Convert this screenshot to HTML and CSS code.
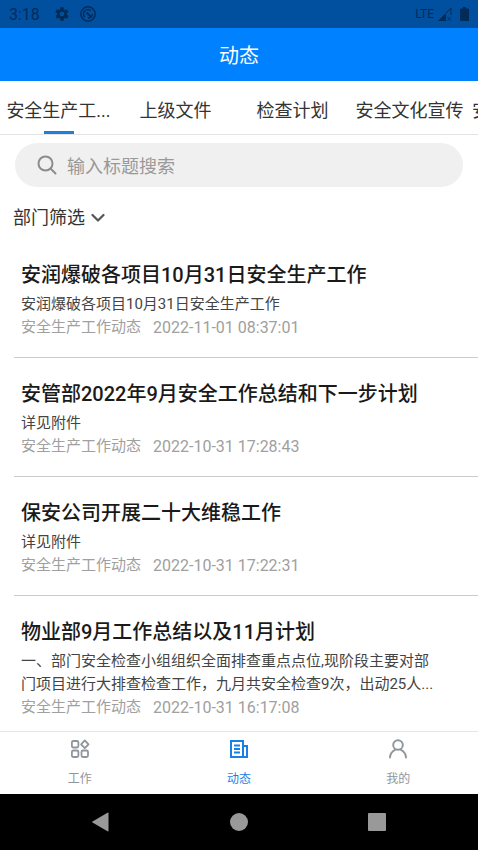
FILE: index.html
```html
<!DOCTYPE html>
<html lang="zh-CN">
<head>
<meta charset="utf-8">
<meta name="viewport" content="width=device-width, initial-scale=1">
<title>动态</title>
<link rel="stylesheet" href="styles.css">
</head>
<body>
<div class="app">
  <div class="status">
    <span class="status-time">3:18</span>
    <svg class="status-gear" width="16" height="16" viewBox="0 0 24 24" aria-hidden="true"><path fill="currentColor" d="M19.4 13a7.500 7.500 0 0 0 0-2l2.100-1.600a.5.5 0 0 0 .1-.7l-2-3.400a.5.5 0 0 0-.6-.2l-2.500 1a7.300 7.300 0 0 0-1.700-1l-.4-2.600a.5.5 0 0 0-.5-.5h-4a.5.5 0 0 0-.5.5l-.4 2.600a7.300 7.300 0 0 0-1.700 1l-2.500-1a.5.5 0 0 0-.6.2l-2 3.400a.5.5 0 0 0 .1.700L4.600 11a7.500 7.500 0 0 0 0 2l-2.100 1.600a.5.5 0 0 0-.1.700l2 3.400c.1.200.4.300.6.200l2.500-1a7.300 7.300 0 0 0 1.700 1l.4 2.600c0 .3.200.5.5.5h4c.3 0 .5-.2.5-.5l.4-2.600a7.300 7.300 0 0 0 1.700-1l2.500 1c.2.100.5 0 .6-.2l2-3.400a.5.5 0 0 0-.1-.7zM12 15.500a3.500 3.500 0 1 1 0-7 3.500 3.500 0 0 1 0 7z"/></svg>
    <svg class="status-sync" width="16" height="16" viewBox="0 0 16 16" aria-hidden="true" fill="none" stroke="currentColor"><circle cx="8" cy="8" r="7.200" stroke-width="1.400"/><path stroke-width="1.400" d="M4.800 11.200A4.300 4.300 0 0 1 10.800 4.800M8 12.300A4.300 4.300 0 0 0 12.300 8"/><path stroke-width="2" d="m6.500 6.500 5 5"/></svg>
    <span class="status-net">LTE</span>
    <svg width="14" height="14" viewBox="0 0 14 14" aria-hidden="true"><path fill="currentColor" d="M0 14 8 6v8z"/><path fill="none" stroke="currentColor" d="M8 6 13 1v7M9.500 10l3.500 3.500M13 10l-3.500 3.500"/></svg>
    <svg class="status-battery" width="9" height="14" viewBox="0 0 9 14" aria-hidden="true"><path fill="currentColor" d="M3 0h3v1.500h2a1 1 0 0 1 1 1V13a1 1 0 0 1-1 1H1a1 1 0 0 1-1-1V2.500a1 1 0 0 1 1-1h2z"/></svg>
  </div>
  <header class="header"><h1>动态</h1></header>
  <nav class="tabs">
    <a class="tab tab-active" href="#">安全生产工...</a>
    <a class="tab" href="#">上级文件</a>
    <a class="tab" href="#">检查计划</a>
    <a class="tab" href="#">安全文化宣传</a>
    <a class="tab tab-peek" href="#">安</a>
  </nav>
  <label class="search">
    <svg width="20" height="20" viewBox="0 0 20 20" aria-hidden="true" fill="none" stroke="currentColor" stroke-width="2"><circle cx="8.500" cy="8.500" r="7"/><path stroke-linecap="round" d="m13.500 13.500 5 5"/></svg>
    <input type="search" placeholder="输入标题搜索" aria-label="输入标题搜索">
  </label>
  <button class="filter" type="button">部门筛选
    <svg width="14" height="10" viewBox="0 0 14 10" aria-hidden="true"><path fill="none" stroke="currentColor" stroke-width="2.200" stroke-linecap="round" stroke-linejoin="round" d="m1.500 2 5.500 5.500L12.500 2"/></svg>
  </button>
  <main class="list">
    <article class="item">
      <h2>安润爆破各项目10月31日安全生产工作</h2>
      <p class="summary">安润爆破各项目10月31日安全生产工作</p>
      <p class="meta"><span>安全生产工作动态</span><time>2022-11-01 08:37:01</time></p>
    </article>
    <article class="item">
      <h2>安管部2022年9月安全工作总结和下一步计划</h2>
      <p class="summary">详见附件</p>
      <p class="meta"><span>安全生产工作动态</span><time>2022-10-31 17:28:43</time></p>
    </article>
    <article class="item">
      <h2>保安公司开展二十大维稳工作</h2>
      <p class="summary">详见附件</p>
      <p class="meta"><span>安全生产工作动态</span><time>2022-10-31 17:22:31</time></p>
    </article>
    <article class="item">
      <h2>物业部9月工作总结以及11月计划</h2>
      <p class="summary">一、部门安全检查小组组织全面排查重点点位,现阶段主要对部门项目进行大排查检查工作，九月共安全检查9次，出动25人...</p>
      <p class="meta"><span>安全生产工作动态</span><time>2022-10-31 16:17:08</time></p>
    </article>
  </main>
  <nav class="bottom">
    <a href="#"><svg width="20" height="20" viewBox="0 0 20 20" aria-hidden="true" fill="none" stroke="currentColor" stroke-width="1.800"><rect x="1.900" y="2" width="6.500" height="6.500" rx="1.500"/><rect x="1.900" y="11.500" width="6.500" height="6.500" rx="1.500"/><rect x="11.500" y="11.500" width="6.500" height="6.500" rx="1.500"/><path stroke-linejoin="round" d="m14.800 1.400 3.700 3.900-3.700 3.900-3.700-3.900z"/></svg>工作</a>
    <a class="current" href="#"><svg width="20" height="20" viewBox="0 0 20 20" aria-hidden="true" fill="none" stroke="currentColor" stroke-width="2"><path d="M14 18V2H2v16h16V7h-4M5 6.500h6M5 10h6M5 13.500h6"/></svg>动态</a>
    <a href="#"><svg width="20" height="20" viewBox="0 0 20 20" aria-hidden="true" fill="none" stroke="currentColor" stroke-width="1.900" stroke-linecap="round"><circle cx="10" cy="6" r="4.800"/><path d="M2 18.500c.3-4 2.600-6.500 5.500-7.800M18 18.500c-.3-4-2.600-6.500-5.500-7.800"/></svg>我的</a>
  </nav>
  <div class="system">
    <button type="button" aria-label="返回"><svg width="20" height="20" viewBox="0 0 20 20"><path fill="currentColor" d="M17.500 1.200v17.600a.7.7 0 0 1-1 .5L1.500 10.600a.7.7 0 0 1 0-1.200L16.500.7a.7.7 0 0 1 1 .5z"/></svg></button>
    <button type="button" aria-label="主屏幕"><svg width="20" height="20" viewBox="0 0 20 20"><circle fill="currentColor" cx="10" cy="10" r="9"/></svg></button>
    <button type="button" aria-label="最近任务"><svg width="20" height="20" viewBox="0 0 20 20"><rect fill="currentColor" x="1" y="1" width="18" height="18" rx="1"/></svg></button>
  </div>
</div>
</body>
</html>
```
FILE: styles.css
```css
* {
  box-sizing: border-box;
}

body {
  margin: 0;
  background: #fff;
  color: #333;
  font-family: Roboto, "Noto Sans CJK SC", sans-serif;
}

h1,
h2,
p {
  margin: 0;
}

a {
  color: inherit;
  text-decoration: none;
}

button {
  border: 0;
  background: none;
  font: inherit;
}

svg {
  display: block;
  flex: none;
}

.app {
  display: flex;
  flex-direction: column;
  height: 100vh;
}

.app > * {
  flex: none;
}

.status {
  display: flex;
  align-items: center;
  height: 28px;
  padding: 0 9px;
  background: #00509f;
  color: #032b58;
}

.status-time {
  font-size: 16px;
}

.status-gear {
  margin-left: 14px;
}

.status-sync {
  margin-left: 10px;
}

.status-net {
  margin-left: auto;
  margin-right: 4px;
  font-size: 12px;
}

.status-battery {
  margin-left: 8px;
}

.header {
  display: flex;
  align-items: center;
  justify-content: center;
  height: 53px;
  background: #0081ff;
  color: #fff;
}

.header h1 {
  font-size: 20px;
  font-weight: 400;
}

.tabs {
  display: flex;
  height: 54px;
  overflow: hidden;
  border-bottom: 1px solid #e4e4e4;
}

.tab {
  position: relative;
  flex: 0 0 117px;
  padding-top: 4px;
  font-size: 18px;
  line-height: 52px;
  text-align: center;
  white-space: nowrap;
}

.tab-active::after {
  content: "";
  position: absolute;
  bottom: 0;
  left: 50%;
  width: 30px;
  height: 3px;
  margin-left: -15px;
  background: #1f7fd6;
}

.tab-peek {
  padding-left: 4px;
  text-align: left;
}

.search {
  display: flex;
  align-items: center;
  gap: 10px;
  height: 44px;
  margin: 8px 15px 0;
  padding: 0 22px;
  border-radius: 22px;
  background: #f0f0f0;
  color: #8c8c8c;
}

.search input {
  flex: 1;
  min-width: 0;
  padding: 2px 0 0;
  border: 0;
  outline: 0;
  background: none;
  color: #333;
  font: inherit;
  font-size: 18px;
}

.search input::placeholder {
  color: #999;
}

.filter {
  display: flex;
  align-items: center;
  align-self: flex-start;
  gap: 6px;
  margin: 19px 0 9px;
  padding: 0 13px;
  color: #333;
  font-size: 18px;
  line-height: 24px;
}

.filter svg {
  color: #555;
}

.app > .list {
  flex: 1 1 0;
  min-height: 0;
  overflow-y: auto;
  scrollbar-width: none;
  padding-left: 14px;
}

.item {
  padding: 21px 40px 18px 7px;
  border-bottom: 1px solid #ccc;
}

.item h2 {
  margin-bottom: 3px;
  color: #1a1a1a;
  font-size: 20px;
  font-weight: 500;
  line-height: 30px;
}

.summary,
.meta {
  font-size: 15px;
  line-height: 23px;
}

.summary {
  color: #444;
}

.meta {
  display: flex;
  gap: 12px;
  color: #a0a0a0;
}

.meta time {
  font-size: 16px;
}

.bottom {
  display: flex;
  height: 63px;
  border-top: 1px solid #e6e6e6;
}

.bottom a {
  display: flex;
  flex: 1;
  flex-direction: column;
  align-items: center;
  gap: 10px;
  padding-top: 7px;
  color: #8f959b;
  font-size: 12px;
  line-height: 20px;
}

.bottom .current {
  color: #1a7fe6;
}

.system {
  display: flex;
  align-items: center;
  justify-content: center;
  gap: 118px;
  height: 56px;
  background: #000;
  color: #999;
}

.system button {
  padding: 0;
  color: inherit;
}
```
